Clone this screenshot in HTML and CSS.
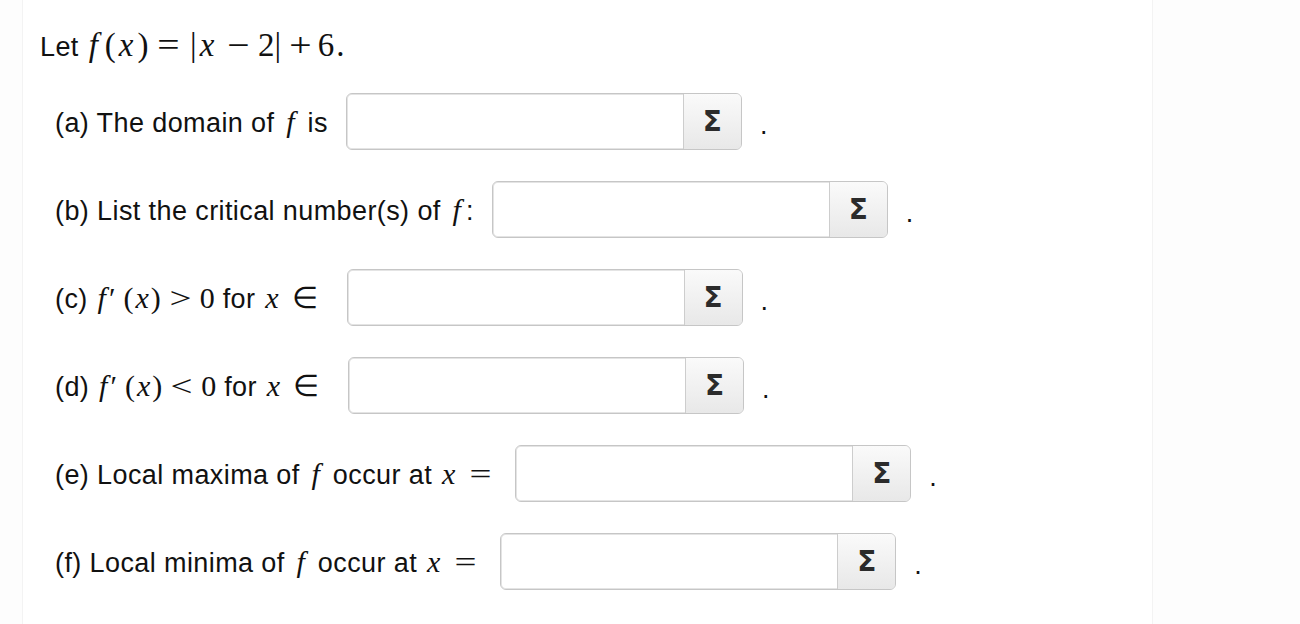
FILE: index.html
```html
<!DOCTYPE html>
<html>
<head>
<meta charset="utf-8">
<link rel="stylesheet" href="styles.css">
</head>
<body>
<div class="page">
  <p class="intro">Let <span class="m im"><i class="im-f">f</i>(<i class="im-x">x</i>)<span class="op im-eq">=</span>|<i class="im-x2">x</i><span class="op im-minus">−</span>2|<span class="op im-plus">+</span><span class="im-6">6</span>.</span></p>

  <div class="part">
    <span class="label">(a) The domain of <i class="m lf">f</i> is</span>
    <span class="field"><span class="box"></span><span class="sigma">Σ</span></span>
    <span class="dot">.</span>
  </div>

  <div class="part">
    <span class="label">(b) List the critical number(s) of <i class="m lf">f</i>:</span>
    <span class="field"><span class="box"></span><span class="sigma">Σ</span></span>
    <span class="dot">.</span>
  </div>

  <div class="part">
    <span class="label">(c) <span class="m"><i class="f">f</i><span class="pr">′</span>(<i class="x">x</i>)<span class="op rel">&gt;</span>0</span> for <i class="m x">x</i><span class="m in">∈</span></span>
    <span class="field"><span class="box"></span><span class="sigma">Σ</span></span>
    <span class="dot">.</span>
  </div>

  <div class="part">
    <span class="label">(d) <span class="m"><i class="f">f</i><span class="pr">′</span>(<i class="x">x</i>)<span class="op rel">&lt;</span>0</span> for <i class="m x">x</i><span class="m in">∈</span></span>
    <span class="field"><span class="box"></span><span class="sigma">Σ</span></span>
    <span class="dot">.</span>
  </div>

  <div class="part">
    <span class="label">(e) Local maxima of <i class="m lf">f</i> occur at <span class="m"><i class="x">x</i><span class="op eq-end">=</span></span></span>
    <span class="field"><span class="box"></span><span class="sigma">Σ</span></span>
    <span class="dot">.</span>
  </div>

  <div class="part">
    <span class="label">(f) Local minima of <i class="m lf">f</i> occur at <span class="m"><i class="x">x</i><span class="op eq-end">=</span></span></span>
    <span class="field"><span class="box"></span><span class="sigma">Σ</span></span>
    <span class="dot">.</span>
  </div>
</div>
</body>
</html>
```

FILE: styles.css
```css
html, body {
  margin: 0;
  padding: 0;
  background: #fdfdfd;
}

body {
  font-family: "Liberation Sans", Arial, Helvetica, sans-serif;
  font-size: 27px;
  letter-spacing: 0.4px;
  color: #111;
}

.page {
  width: 1131px;
  height: 624px;
  margin-left: 22px;
  box-sizing: border-box;
  border-left: 1px solid #f3f3f3;
  border-right: 1px solid #f3f3f3;
  background: #fff;
  padding: 16px 0 0 17px;
}

.intro {
  margin: 0 0 19px 0;
  height: 58px;
  line-height: 58px;
}

/* math */
.m {
  font-family: "Liberation Serif", "Times New Roman", serif;
  font-size: 30px;
  font-style: normal;
  letter-spacing: 0;
}

.m i, i.m {
  font-style: italic;
}

.op {
  display: inline-block;
  transform: scaleX(1.3);
}

/* intro formula */
.im {
  font-size: 33px;
}

.im .op {
  transform: scaleX(1.2);
}

.im-f { margin: 0 7px 0 2px; }
.im-x { margin: 0 4px 0 3px; }
.im-eq { margin: 0 12px 0 11px; }
.im-x2 { margin: 0 4px 0 3px; }
.im-minus { margin: 0 10px 0 11px; }
.im-plus { margin: 0 8px 0 10px; }
.im-6 { margin-right: 2px; }

/* label math */
.f {
  margin: 0 3px 0 2px;
}

.lf {
  margin: 0 5px 0 4px;
}

.x {
  margin: 0 2px;
}

.rel {
  margin: 0 11px;
}

.in {
  margin: 0 11px 0 11px;
}

.eq-end {
  margin: 0 8px 0 15px;
}

.pr {
  margin: 0 8px 0 0;
}

/* rows */
.part {
  display: flex;
  align-items: center;
  height: 57px;
  margin: 0 0 31px 15px;
}

.label {
  white-space: nowrap;
}

.field {
  display: flex;
  margin-left: 18px;
  width: 396px;
  height: 57px;
  box-sizing: border-box;
  border: 1px solid #c6c6c6;
  border-radius: 6px;
  overflow: hidden;
  box-shadow: inset 0 0 0 1px #e4e4e4;
}

.box {
  flex: 1;
  background: #fff;
  margin: 1px 0 1px 1px;
  border-radius: 5px 0 0 5px;
}

.sigma {
  width: 57px;
  border-left: 1px solid #cdcdcd;
  background: linear-gradient(#fafafa, #e8e8e8);
  display: flex;
  align-items: center;
  justify-content: center;
  font-family: "DejaVu Sans", sans-serif;
  font-weight: bold;
  font-size: 28px;
  letter-spacing: 0;
  color: #2b2b2b;
}

.dot {
  margin-left: 18px;
  position: relative;
  top: 4px;
}
```
